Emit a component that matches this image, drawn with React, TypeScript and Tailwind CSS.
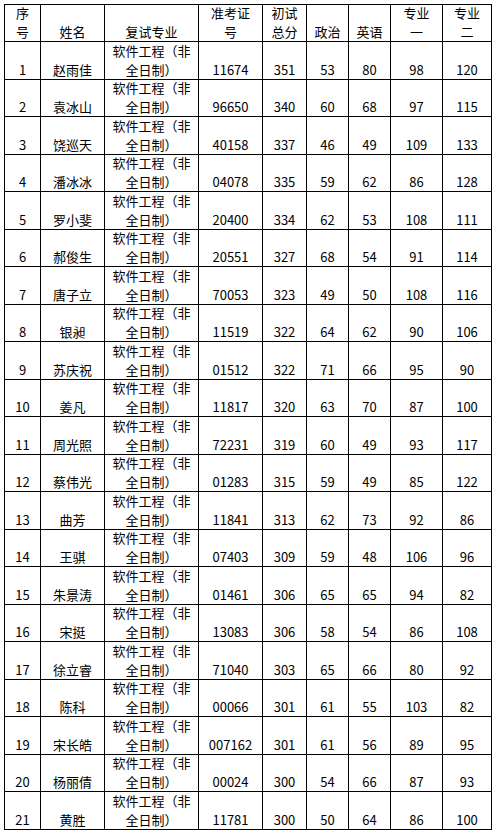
const widths = [
  "w-[36px]",
  "w-[64px]",
  "w-[94px]",
  "w-[64px]",
  "w-[44px]",
  "w-[42px]",
  "w-[42px]",
  "w-[52px]",
  "w-[49px]",
];

const header: string[][] = [
  ["序", "号"],
  ["姓名"],
  ["复试专业"],
  ["准考证", "号"],
  ["初试", "总分"],
  ["政治"],
  ["英语"],
  ["专业", "一"],
  ["专业", "二"],
];

const rows = [
  ["1", "赵雨佳", "11674", "351", "53", "80", "98", "120"],
  ["2", "袁冰山", "96650", "340", "60", "68", "97", "115"],
  ["3", "饶巡天", "40158", "337", "46", "49", "109", "133"],
  ["4", "潘冰冰", "04078", "335", "59", "62", "86", "128"],
  ["5", "罗小斐", "20400", "334", "62", "53", "108", "111"],
  ["6", "郝俊生", "20551", "327", "68", "54", "91", "114"],
  ["7", "唐子立", "70053", "323", "49", "50", "108", "116"],
  ["8", "银昶", "11519", "322", "64", "62", "90", "106"],
  ["9", "苏庆祝", "01512", "322", "71", "66", "95", "90"],
  ["10", "姜凡", "11817", "320", "63", "70", "87", "100"],
  ["11", "周光照", "72231", "319", "60", "49", "93", "117"],
  ["12", "蔡伟光", "01283", "315", "59", "49", "85", "122"],
  ["13", "曲芳", "11841", "313", "62", "73", "92", "86"],
  ["14", "王骐", "07403", "309", "59", "48", "106", "96"],
  ["15", "朱景涛", "01461", "306", "65", "65", "94", "82"],
  ["16", "宋挺", "13083", "306", "58", "54", "86", "108"],
  ["17", "徐立睿", "71040", "303", "65", "66", "80", "92"],
  ["18", "陈科", "00066", "301", "61", "55", "103", "82"],
  ["19", "宋长皓", "007162", "301", "61", "56", "89", "95"],
  ["20", "杨丽倩", "00024", "300", "54", "66", "87", "93"],
  ["21", "黄胜", "11781", "300", "50", "64", "86", "100"],
];

function Cell({ col, lines }: { col: number; lines: string[] }) {
  return (
    <div
      className={`${widths[col]} flex shrink-0 flex-col items-center justify-end border-r border-black text-center leading-[19px] whitespace-nowrap`}
    >
      {lines.map((l, i) => (
        <span key={i}>{l}</span>
      ))}
    </div>
  );
}

export default function App() {
  return (
    <div
      className="min-h-screen bg-white pt-[4px] pl-[4px] text-[13px] text-black"
      style={{ fontFamily: '"Noto Sans CJK SC", "Noto Sans", sans-serif' }}
    >
      <div className="w-[488px] border-t border-l border-black">
        {/* 表头 */}
        <div className="flex h-[37px] border-b border-black">
          {header.map((h, i) => (
            <Cell key={i} col={i} lines={h} />
          ))}
        </div>

        {rows.map((r, idx) => {
          const cells: string[][] = [
            [r[0]],
            [r[1]],
            ["软件工程（非", "全日制）"],
            ...r.slice(2).map((v) => [v]),
          ];
          return (
            <div
              key={r[0]}
              className={`flex border-b border-black ${idx % 2 === 0 ? "h-[38px]" : "h-[37px]"}`}
            >
              {cells.map((c, i) => (
                <Cell key={i} col={i} lines={c} />
              ))}
            </div>
          );
        })}
      </div>
    </div>
  );
}
